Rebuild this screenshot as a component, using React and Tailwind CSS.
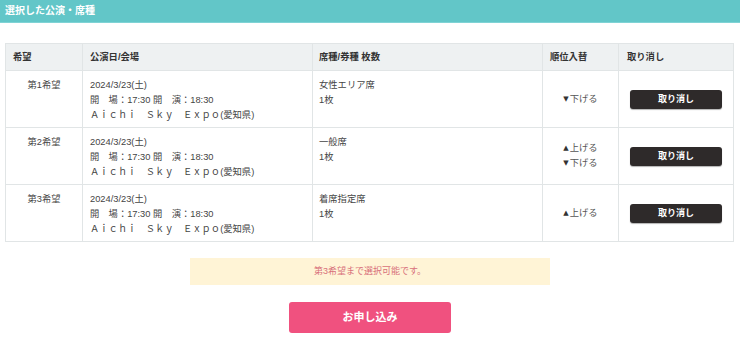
import React from "react";

const rows = [
  { no: "第1希望", seat: "女性エリア席", up: false, down: true },
  { no: "第2希望", seat: "一般席", up: true, down: true },
  { no: "第3希望", seat: "着席指定席", up: true, down: false },
];

export default function App() {
  return (
    <div
      className="w-[740px] h-[347px] bg-white text-[#444]"
      style={{ fontFamily: '"Liberation Sans", "Noto Sans CJK JP", sans-serif' }}
    >
      <div className="h-[23px] bg-[#62c6c8] border-b border-[#7fd3d5] flex items-center pl-[5px]">
        <span className="text-white text-[10px] font-bold leading-none">選択した公演・席種</span>
      </div>
      <div className="pl-[5px] pr-[6px] pt-[20px]">
        <table className="w-full border-collapse border border-[#e1e5e6] text-[9.3px] leading-[15px]">
          <thead>
            <tr className="bg-[#eef1f2] h-[27px] text-[#333]">
              <th className="w-[77px] border border-[#e1e5e6] text-left font-semibold pl-[7px]">希望</th>
              <th className="w-[230px] border border-[#e1e5e6] text-left font-semibold pl-[7px]">公演日/会場</th>
              <th className="w-[230px] border border-[#e1e5e6] text-left font-semibold pl-[6px]">席種/券種 枚数</th>
              <th className="w-[76px] border border-[#e1e5e6] text-left font-semibold pl-[7px]">順位入替</th>
              <th className="border border-[#e1e5e6] text-left font-semibold pl-[8px]">取り消し</th>
            </tr>
          </thead>
          <tbody>
            {rows.map((r) => (
              <tr key={r.no} className="h-[57px]">
                <td className="border border-[#e1e5e6] align-top text-center pt-[7px]">{r.no}</td>
                <td className="border border-[#e1e5e6] align-top pl-[7px] pt-[7px]">
                  <div>2024/3/23(土)</div>
                  <div>開　場：17:30 開　演：18:30</div>
                  <div>Ａｉｃｈｉ　Ｓｋｙ　Ｅｘｐｏ(愛知県)</div>
                </td>
                <td className="border border-[#e1e5e6] align-top pl-[6px] pt-[7px]">
                  <div>{r.seat}</div>
                  <div>1枚</div>
                </td>
                <td className="border border-[#e1e5e6] align-middle text-center">
                  {r.up && (
                    <div className="text-[#555] flex items-center justify-center gap-[1px]">
                      <span className="text-[7px] text-[#333]" style={{ fontFamily: '"DejaVu Sans", sans-serif' }}>▲</span>
                      <span>上げる</span>
                    </div>
                  )}
                  {r.down && (
                    <div className="text-[#555] flex items-center justify-center gap-[1px]">
                      <span className="text-[7px] text-[#333]" style={{ fontFamily: '"DejaVu Sans", sans-serif' }}>▼</span>
                      <span>下げる</span>
                    </div>
                  )}
                </td>
                <td className="border border-[#e1e5e6] align-middle">
                  <div className="flex justify-center">
                    <button className="w-[92px] h-[19px] bg-[#2e2a2a] rounded-[3px] text-white text-[9px] font-bold leading-none shadow-[0_1px_1px_rgba(0,0,0,0.3)]">
                      取り消し
                    </button>
                  </div>
                </td>
              </tr>
            ))}
          </tbody>
        </table>
      </div>
      <div className="mt-[16px] mx-auto w-[360px] h-[27px] bg-[#fff4d6] flex items-center justify-center text-[9px] text-[#d8707a]">
        第3希望まで選択可能です。
      </div>
      <div className="mt-[17px] flex justify-center">
        <button className="w-[162px] h-[31px] bg-[#f0517f] rounded-[3px] text-white text-[11px] font-bold">
          お申し込み
        </button>
      </div>
    </div>
  );
}
